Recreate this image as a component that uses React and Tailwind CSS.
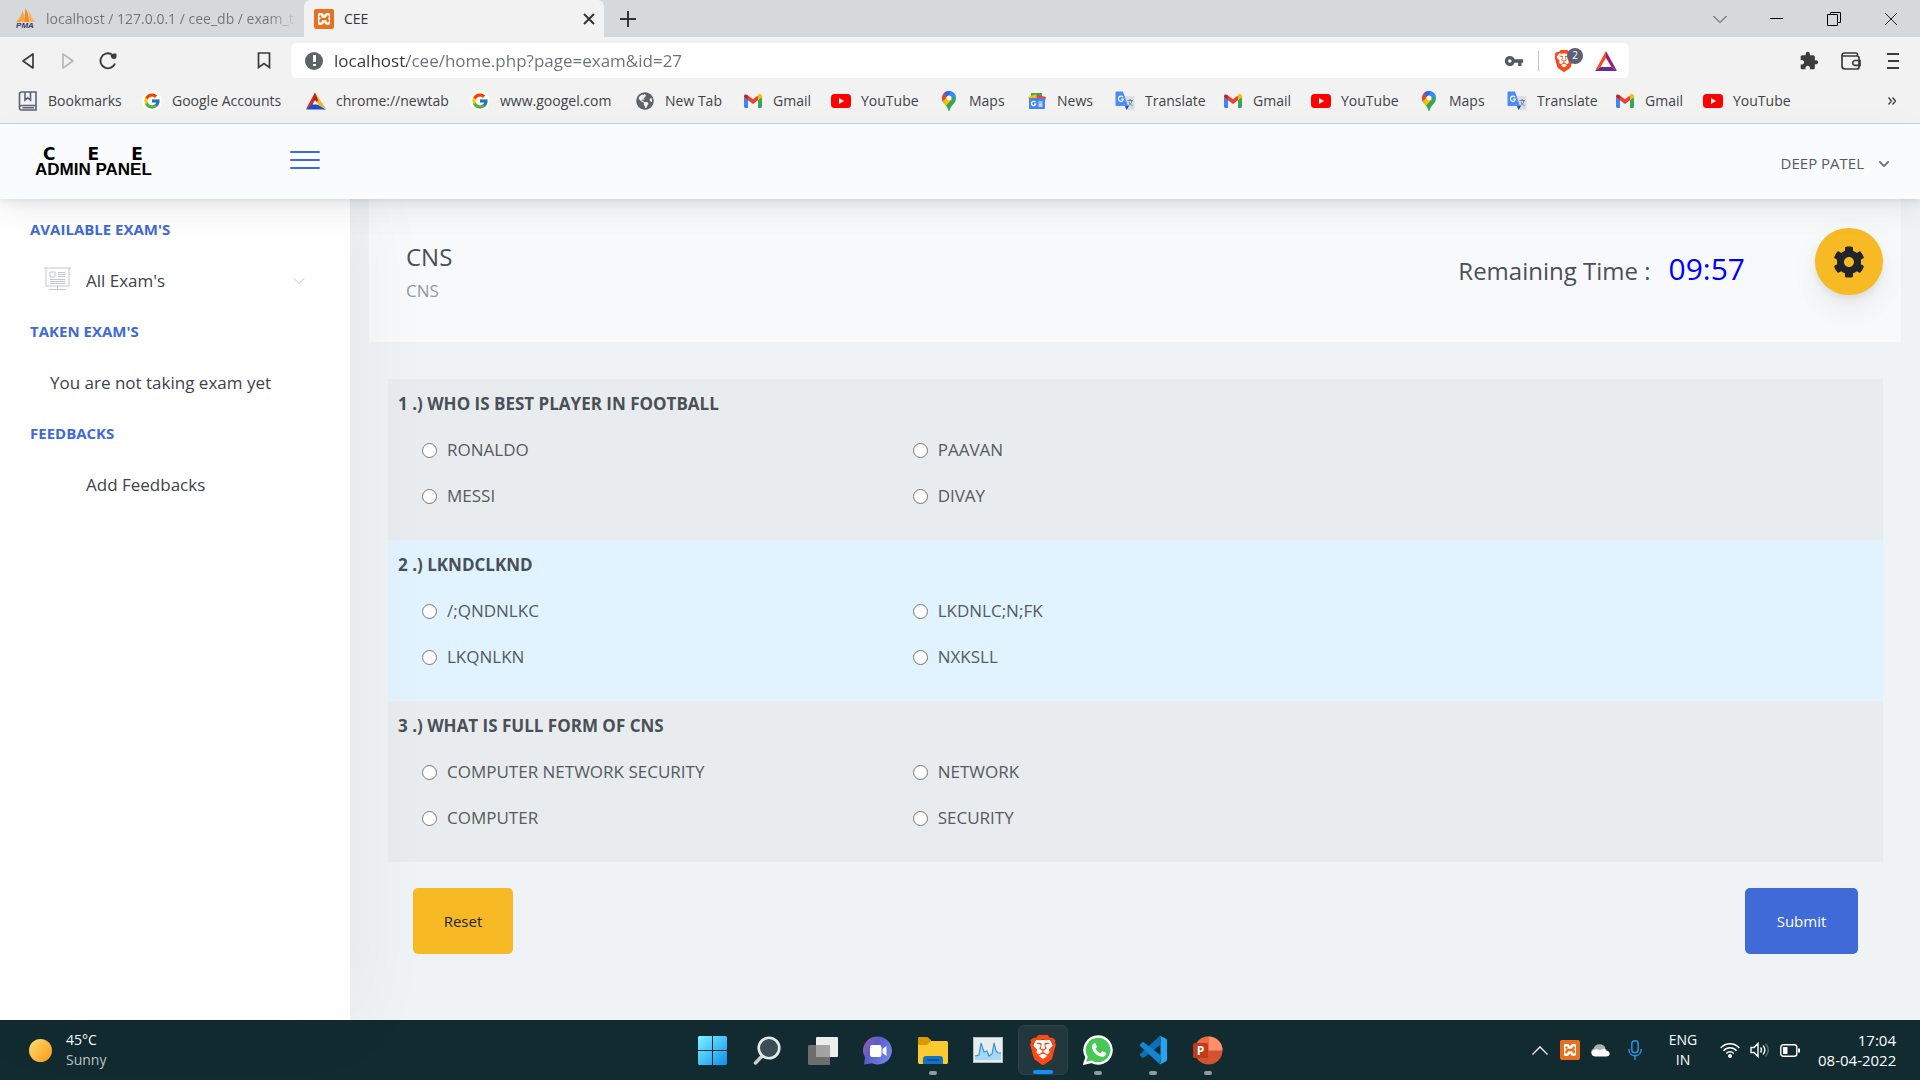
import React from "react";
import { FcGoogle } from "react-icons/fc";
import { SiBrave, SiXampp } from "react-icons/si";
import { FaChevronDown, FaCog, FaGlobeAmericas } from "react-icons/fa";
import { MdVpnKey, MdExtension } from "react-icons/md";

/* ---------- Icons ---------- */

function XamppIcon({ className }) {
  return (
    <span className={`relative inline-flex shrink-0 rounded-sm bg-[#e8701f] ${className}`}>
      <span className="absolute inset-1 bg-white" />
      <SiXampp className="relative h-full w-full text-[#e8701f]" />
    </span>
  );
}

function BraveIcon({ className }) {
  return (
    <span className={`relative inline-flex shrink-0 text-[#fb4a17] ${className}`}>
      <svg viewBox="0 0 24 24" className="absolute inset-0 h-full w-full" aria-hidden="true">
        <path d="M6 4h12l2 5-3 9-5 4-5-4-3-9z" fill="#fff" />
      </svg>
      <SiBrave className="relative h-full w-full" />
    </span>
  );
}

function PmaIcon() {
  return (
    <svg viewBox="0 0 22 24" className="h-6 w-[22px] shrink-0" aria-hidden="true">
      <path d="M8.500 4C8 8 5 12 2 15h7.500C10.500 11 10.500 7 8.500 4z" fill="#f7a53b" />
      <path d="M11.500 1c-.5 6-1 10-1.500 14h5c0-5-1-10-3.500-14z" fill="#f08c1e" />
      <path d="M14.500 3c.5 5 .5 8 1 12h5.500c-3-4-5-8-6.500-12z" fill="#f9b55a" />
      <text x="11" y="21" textAnchor="middle" fontSize="8" fontWeight="bold" fontStyle="italic" fontFamily="Liberation Sans, sans-serif" fill="#34386b">
        PMA
      </text>
    </svg>
  );
}

function BookmarksIcon() {
  return (
    <svg viewBox="0 0 20 20" className="h-5 w-5" fill="none" stroke="#5d6077" strokeWidth="1.6" aria-hidden="true">
      <path d="M18 1H3.500C2 1 1.500 2 1.500 3v14c0 1.500 1 2 2 2H18zM18 14.500H3.500c-1.300 0-2 .8-2 2M7 1v8l2.800-2.200L12.500 9V1M4.500 16.800H16" />
    </svg>
  );
}

function GoogleIcon() {
  return (
    <span className="flex h-5 w-5 items-center justify-center rounded-full bg-white">
      <FcGoogle className="h-[18px] w-[18px]" />
    </span>
  );
}

function NewTabTriangle() {
  return (
    <svg viewBox="0 0 20 20" className="h-5 w-5" aria-hidden="true">
      <path d="M9 1.500 0 18l9-5z" fill="#d92a20" />
      <path d="M9 1.500 20 18l-9-5z" fill="#f6b21b" />
      <path d="M9 1.500 7.500 9 10 13l2-4z" fill="#a8281f" />
      <path d="M0 18.500 8 11.500 20 18.500z" fill="#1d4fc4" />
      <path d="M9 9 6.500 13.500h6z" fill="#f2f2f2" />
    </svg>
  );
}

function GmailIcon() {
  return (
    <svg viewBox="0 0 20 20" className="h-5 w-5" aria-hidden="true">
      <path d="M1 6v9.500C1 16.300 1.600 17 2.400 17H5V8.800z" fill="#4285f4" />
      <path d="M15 17h2.600c.8 0 1.400-.7 1.400-1.500V6l-4 2.800z" fill="#34a853" />
      <path d="M15 4.500v4.700L19 6V5c0-2-2.200-3-3.500-1.900z" fill="#fbbc04" />
      <path d="M5 9.200V4.500l5 3.800 5-3.800v4.700L10 13z" fill="#ea4335" />
      <path d="M1 5v1.100L5 9.200V4.500l-.6-.5C3 2.900 1 3.300 1 5z" fill="#c5221f" />
    </svg>
  );
}

function YouTubeIcon() {
  return (
    <svg viewBox="0 0 20 20" className="h-5 w-5" aria-hidden="true">
      <rect x="0" y="3" width="20" height="14" rx="3.500" fill="#f00" />
      <path d="M8 7v6l5-3z" fill="#fff" />
    </svg>
  );
}

function MapsIcon() {
  return (
    <svg viewBox="0 0 20 20" className="h-5 w-5" aria-hidden="true">
      <defs>
        <clipPath id="mapPin">
          <path d="M10 0a7 7 0 0 0-7 7c0 3 1.300 4.600 3 6.500 1.800 2 2.700 3.500 3.200 5.600.2 1.200 1.400 1.200 1.600 0 .5-2.100 1.400-3.600 3.200-5.600 1.700-1.900 3-3.500 3-6.500a7 7 0 0 0-7-7z" />
        </clipPath>
      </defs>
      <g clipPath="url(#mapPin)">
        <rect width="20" height="20" fill="#34a853" />
        <path d="M7-1h13v5l-7 4-3-1-4-4z" fill="#4285f4" />
        <path d="M0 0h5l5 6-7 6z" fill="#ea4335" />
        <path d="M5 2 8-1h4l-3 7z" fill="#1a73e8" />
        <path d="M2 12 8 6l5 2-7 8z" fill="#fbbc04" />
      </g>
      <circle cx="10" cy="7" r="2.500" fill="#fff" />
    </svg>
  );
}

function NewsIcon() {
  return (
    <svg viewBox="0 0 20 20" className="h-5 w-5" aria-hidden="true">
      <path d="M4 2h11v8H4z" fill="#34a853" />
      <path d="M1 6 9 3l3 9H3z" fill="#fbbc04" />
      <path d="M10 4l9 2-2 8h-8z" fill="#ea4335" />
      <rect x="2" y="7" width="16" height="11" rx="1" fill="#4285f4" />
      <path d="M8.500 11.200a2.200 2.200 0 1 0 .3 2H7M11.500 11h4M11.500 13.100h4M11.500 15.200h4" fill="none" stroke="#fff" strokeWidth="1.200" />
    </svg>
  );
}

function TranslateIcon() {
  return (
    <svg viewBox="0 0 20 20" className="h-5 w-5" aria-hidden="true">
      <path d="M8 5h10.500c.6 0 1 .4 1 1v12c0 .6-.4 1-1 1H11z" fill="#dcdee1" />
      <path d="M12.500 9.500h5.500M15.200 8v1.500M17 9.500c-.6 2.800-2 4.500-4 5.500M14 11c.8 1.800 1.900 3 3.800 4" fill="none" stroke="#5f7c9c" strokeWidth="1" />
      <path d="M10 15h4l-2.500 4z" fill="#1a4fb0" />
      <path d="M1.500.500H8L13 15H1.500C.9 15 .5 14.600.5 14V1.500c0-.6.4-1 1-1z" fill="#4b8cf5" />
      <path d="M8 6A2.600 2.600 0 1 0 8.600 8H6" fill="none" stroke="#fff" strokeWidth="1.200" />
    </svg>
  );
}

function TriangleOutline({ flip, color }) {
  return (
    <svg viewBox="0 0 16 18" className="h-[18px] w-4" fill="none" stroke={color} strokeWidth="1.700" strokeLinejoin="round" aria-hidden="true">
      <path d={flip ? "M3 2v14l10-7z" : "M13 2v14L3 9z"} />
    </svg>
  );
}

function VsCodeIcon() {
  return (
    <svg viewBox="0 0 32 32" className="h-[30px] w-[30px]" aria-hidden="true">
      <path d="M23 1 2.500 20c-.8.7-.8 1.500-.1 2.200l2 1.800c.6.6 1.300.6 2 .1L24 10.500z" fill="#0b70b8" />
      <path d="M23 31 2.500 12c-.8-.7-.8-1.500-.1-2.200l2-1.800c.6-.6 1.300-.6 2-.1L24 21.500z" fill="#1286d2" />
      <path d="M22 1.500c.6-.7 1.500-.8 2.500-.3l5.500 2.700c.7.400 1 .9 1 1.600v21c0 .7-.3 1.200-1 1.600l-5.500 2.700c-1 .500-1.900.4-2.500-.3 1 .3 2-.2 2-1.500V3c0-1.300-1-1.800-2-1.500z" fill="#2aa3ef" />
    </svg>
  );
}

/* ---------- Browser frame ---------- */

const bookmarks = [
  { label: "Bookmarks", icon: BookmarksIcon, width: "w-[74px]" },
  { label: "Google Accounts", icon: GoogleIcon, width: "w-[114px]" },
  { label: "chrome://newtab", icon: NewTabTriangle, width: "w-[114px]" },
  { label: "www.googel.com", icon: GoogleIcon, width: "w-[115px]" },
  { label: "New Tab", icon: () => <FaGlobeAmericas className="h-[18px] w-5 text-[#5f6368]" />, width: "w-[58px]" },
  { label: "Gmail", icon: GmailIcon, width: "w-[38px]" },
  { label: "YouTube", icon: YouTubeIcon, width: "w-[58px]" },
  { label: "Maps", icon: MapsIcon, width: "w-[38px]" },
  { label: "News", icon: NewsIcon, width: "w-[38px]" },
  { label: "Translate", icon: TranslateIcon, width: "w-[58px]" },
  { label: "Gmail", icon: GmailIcon, width: "w-[38px]" },
  { label: "YouTube", icon: YouTubeIcon, width: "w-[58px]" },
  { label: "Maps", icon: MapsIcon, width: "w-[38px]" },
  { label: "Translate", icon: TranslateIcon, width: "w-[58px]" },
  { label: "Gmail", icon: GmailIcon, width: "w-[38px]" },
  { label: "YouTube", icon: YouTubeIcon, width: "w-[58px]" },
];

function TabStrip() {
  return (
    <div className="flex h-[37px] bg-[#d5d9dc] text-sm text-[#333639]">
      <button type="button" className="flex w-[304px] items-center gap-2.5 overflow-hidden pl-3.5 pr-1.5">
        <PmaIcon />
        <span className="flex-1 overflow-hidden whitespace-nowrap bg-[linear-gradient(90deg,#707376_88%,transparent)] bg-clip-text text-left text-transparent">
          localhost / 127.0.0.1 / cee_db / exam_t
        </span>
      </button>
      <div className="flex w-[300px] items-center rounded-t-md bg-[#f2f2f2] pl-2.5 pr-1">
        <button type="button" className="flex flex-1 items-center gap-2.5 text-left">
          <XamppIcon className="h-5 w-5" />
          CEE
        </button>
        <button type="button" aria-label="Close tab" className="p-1">
          <svg viewBox="0 0 14 14" className="h-3.5 w-3.5" stroke="#333" strokeWidth="2" aria-hidden="true">
            <path d="M2 2l10 10M12 2 2 12" />
          </svg>
        </button>
      </div>
      <button type="button" aria-label="New tab" className="flex w-12 items-center justify-center">
        <svg viewBox="0 0 16 16" className="h-4 w-4" stroke="#333" strokeWidth="2" aria-hidden="true">
          <path d="M8 0v16M0 8h16" />
        </svg>
      </button>
      <div className="ml-auto flex pr-px">
        <button type="button" aria-label="Search tabs" className="flex w-[57px] items-center justify-center">
          <svg viewBox="0 0 14 14" className="h-3.5 w-3.5" fill="none" stroke="#333" aria-hidden="true">
            <path d="M.500 4 7 10.500 13.500 4" />
          </svg>
        </button>
        <button type="button" aria-label="Minimize" className="flex w-[57px] items-center justify-center">
          <span className="h-px w-[13px] bg-black" />
        </button>
        <button type="button" aria-label="Restore" className="flex w-[57px] items-center justify-center">
          <svg viewBox="0 0 14 14" className="h-3.5 w-3.5" fill="none" stroke="#000" aria-hidden="true">
            <path d="M.500 2.500h10v11H.500zM3.500 2.500v-2h10v10h-3" />
          </svg>
        </button>
        <button type="button" aria-label="Close" className="flex w-[57px] items-center justify-center">
          <svg viewBox="0 0 14 14" className="h-3.5 w-3.5" stroke="#222" aria-hidden="true">
            <path d="M1 1l12 12M13 1 1 13" />
          </svg>
        </button>
      </div>
    </div>
  );
}

function Toolbar() {
  return (
    <div className="flex h-[47px] items-center">
      <div className="flex w-[291px] shrink-0 items-center pl-2 pr-[7px]">
        <button type="button" aria-label="Back" className="flex w-10 justify-center">
          <TriangleOutline color="#3b3b3b" />
        </button>
        <button type="button" aria-label="Forward" className="flex w-10 justify-center">
          <TriangleOutline flip color="#b9b9b9" />
        </button>
        <button type="button" aria-label="Reload" className="flex w-10 justify-center">
          <svg viewBox="0 0 18 18" className="h-[18px] w-[18px]" fill="none" stroke="#3b3b3b" strokeWidth="1.900" aria-hidden="true">
            <path d="M16 11.500A7.500 7.500 0 1 1 12.500 2.200" />
            <path d="M17.300 1.600c.8 3.600-.2 5.600-2.400 5.500-2.200-.1-3.400-2-3.200-4.500 1.500-.8 3.500-1.300 5.600-1z" fill="#3b3b3b" stroke="none" />
          </svg>
        </button>
        <button type="button" aria-label="Bookmark this page" className="ml-auto flex w-10 justify-center">
          <svg viewBox="0 0 14 17" className="h-[17px] w-3.5" fill="none" stroke="#3b3b3b" strokeWidth="1.700" aria-hidden="true">
            <path d="M1.500 1h11v14.500L7 11.500l-5.500 4z" />
          </svg>
        </button>
      </div>
      <div className="flex h-[35px] flex-1 items-center rounded-md bg-white pl-3.5 pr-3">
        <span className="flex h-[18px] w-[18px] items-center justify-center rounded-full bg-[#5f6368]">
          <span className="flex flex-col items-center gap-0.5">
            <span className="h-[7px] w-[3px] bg-white" />
            <span className="h-0.5 w-[3px] bg-white" />
          </span>
        </span>
        <input
          aria-label="Address"
          defaultValue="localhost/cee/home.php?page=exam&id=27"
          className="ml-[11px] min-w-0 flex-1 bg-[linear-gradient(90deg,#333639_73px,#6c7074_73px)] bg-clip-text text-[17px] text-transparent outline-none"
        />
        <MdVpnKey className="h-5 w-5 text-[#55595d]" />
        <span className="ml-3.5 mr-3.5 h-5 w-px bg-[#c4c4c4]" />
        <button type="button" aria-label="Brave Shields" className="relative flex w-[30px]">
          <BraveIcon className="h-[22px] w-[22px]" />
          <span className="absolute -top-0.5 right-0 flex h-4 w-4 items-center justify-center rounded-full bg-[#5d6077] text-[10px] text-white">
            2
          </span>
        </button>
        <button type="button" aria-label="Rewards" className="ml-3">
          <svg viewBox="0 0 22 20" className="h-5 w-[22px]" aria-hidden="true">
            <path d="M11 0 0 20l5.500-4L11 7z" fill="#ff4724" />
            <path d="M11 0v7l5.500 9 5.500 4z" fill="#9e1f63" />
            <path d="M0 20l5.500-4h11l5.500 4z" fill="#662d91" />
          </svg>
        </button>
      </div>
      <div className="flex w-[291px] shrink-0 items-center justify-end pr-1.5 text-[#3b3b3b]">
        <button type="button" aria-label="Extensions" className="flex w-[42px] justify-center">
          <MdExtension className="h-5 w-5" />
        </button>
        <button type="button" aria-label="Wallet" className="flex w-[42px] justify-center">
          <svg viewBox="0 0 20 18" className="h-[18px] w-5" fill="none" stroke="currentColor" strokeWidth="1.700" aria-hidden="true">
            <path d="M16.500 4V2.500C16.500 1.500 16 1 15 1H3.500C2 1 1 2 1 3.200V14c0 2 1 3 3 3h12c1.300 0 2-.7 2-2V6c0-1.300-.7-2-2-2H3.500C2 4 1 4 1 3.200M19 8.500h-5.500a2.500 2.500 0 0 0 0 4.800H19z" />
          </svg>
        </button>
        <button type="button" aria-label="Menu" className="flex w-[42px] justify-center">
          <svg viewBox="0 0 12 16" className="h-4 w-3" stroke="currentColor" strokeWidth="2" aria-hidden="true">
            <path d="M0 1h12M1 8h11M0 15h12" />
          </svg>
        </button>
      </div>
    </div>
  );
}

function BookmarksBar() {
  return (
    <nav aria-label="Bookmarks" className="flex h-10 items-center gap-5 overflow-hidden border-b border-[#d0d3d6] pb-1.5 pl-[18px] pr-6 text-sm text-[#404346]">
      {bookmarks.map(({ label, icon: Icon, width }, i) => (
        <a key={i} href="#bookmark" className="flex shrink-0 items-center gap-2.5 whitespace-nowrap">
          <Icon />
          <span className={width}>{label}</span>
        </a>
      ))}
      <button type="button" aria-label="More bookmarks" className="ml-auto">
        <svg viewBox="0 0 8 8" className="h-2 w-2" fill="none" stroke="#3a3d40" strokeWidth="1.300" aria-hidden="true">
          <path d="M.500.500 3.500 4l-3 3.500M4.500.500 7.500 4l-3 3.500" />
        </svg>
      </button>
    </nav>
  );
}

/* ---------- Web page ---------- */

function PageHeader() {
  return (
    <header className="relative z-20 flex h-[75px] items-center bg-[#fafbfc] shadow-[0_9px_44px_rgba(4,9,20,0.03),0_19px_28px_rgba(4,9,20,0.03),0_5px_11px_rgba(4,9,20,0.05),0_3px_4px_rgba(4,9,20,0.03)]">
      <div className="w-[290px] shrink-0 pl-[35px]">
        <div className="w-[116px] font-bold text-black">
          <div className="flex justify-between px-2 font-['DejaVu_Sans',sans-serif] text-[17px] leading-[15px]">
            <span>C</span>
            <span>E</span>
            <span>E</span>
          </div>
          <div className="whitespace-nowrap font-['Liberation_Sans',sans-serif] text-[17px] leading-[15px]">ADMIN PANEL</div>
        </div>
      </div>
      <button type="button" aria-label="Toggle sidebar" className="flex w-[30px] flex-col gap-1.5 pb-1">
        <span className="h-0.5 rounded-sm bg-[#3f6ad8]" />
        <span className="h-0.5 rounded-sm bg-[#3f6ad8]" />
        <span className="h-0.5 rounded-sm bg-[#3f6ad8]" />
      </button>
      <button type="button" className="ml-auto mr-[30px] flex items-center gap-3.5 pt-1 text-[15px] text-[#555b61]">
        DEEP PATEL
        <FaChevronDown className="h-3 w-3 text-[#6c757d]" />
      </button>
    </header>
  );
}

function Sidebar() {
  const heading = "flex h-[51px] items-center pl-[30px] text-[15px] font-bold text-[#3f6ad8]";
  const row = "flex h-[51px] items-center text-[#3d4349]";
  return (
    <aside className="relative z-10 w-[350px] shrink-0 bg-white pt-[5px] text-[17px] shadow-[9px_0_75px_rgba(0,0,0,0.05)]">
      <h2 className={heading}>AVAILABLE EXAM'S</h2>
      <a href="#exams" className={`${row} pl-[44px] pr-[45px]`}>
        <svg viewBox="0 0 27 24" className="mb-1 h-6 w-[27px]" fill="none" stroke="#c4c6c8" aria-hidden="true">
          <path d="M0 1h27M2 1v18h23V1M6 5h5v5H6zM14 5.500h7M14 7.500h7M14 9.500h7M6 12.500h15M6 14.500h15M6 16.500h15M13.500 19v3M5 22.500h17" />
        </svg>
        <span className="ml-[15px] flex-1">All Exam's</span>
        <svg viewBox="0 0 12 8" className="h-2 w-3" fill="none" stroke="#c4c6c8" aria-hidden="true">
          <path d="M.500 1 6 6.500 11.500 1" />
        </svg>
      </a>
      <h2 className={heading}>TAKEN EXAM'S</h2>
      <p className={`${row} pl-[50px]`}>You are not taking exam yet</p>
      <h2 className={heading}>FEEDBACKS</h2>
      <a href="#feedback" className={`${row} pl-[86px]`}>
        Add Feedbacks
      </a>
    </aside>
  );
}

const questions = [
  { text: "WHO IS BEST PLAYER IN FOOTBALL", options: ["RONALDO", "PAAVAN", "MESSI", "DIVAY"] },
  { text: "LKNDCLKND", options: ["/;QNDNLKC", "LKDNLC;N;FK", "LKQNLKN", "NXKSLL"] },
  {
    text: "WHAT IS FULL FORM OF CNS",
    options: ["COMPUTER NETWORK SECURITY", "NETWORK", "COMPUTER", "SECURITY"],
  },
];

function Question({ index, text, options }) {
  return (
    <fieldset className="h-[161px] bg-[#e8ecee] px-2.5 pt-[13px] even:bg-[#e0f3ff]">
      <legend className="float-left w-full font-bold leading-6">
        {index + 1} .) {text}
      </legend>
      <div className="clear-both grid grid-cols-3 gap-y-[22px] pl-6 pt-[22px] text-[#555b61]">
        {options.map((option, i) => (
          <label key={option} className={`flex h-6 items-center gap-2.5 ${i % 2 ? "col-span-2 pl-[7px]" : ""}`}>
            <input
              type="radio"
              name={`question-${index}`}
              className="h-[15px] w-[15px] appearance-none rounded-full border border-[#767676] bg-white checked:border-4 checked:border-[#0075ff]"
            />
            {option}
          </label>
        ))}
      </div>
    </fieldset>
  );
}

function ExamPage() {
  return (
    <main className="flex-1 bg-[#f0f3f6] text-[#495057]">
      <section className="relative mx-[19px] flex h-[143px] items-center justify-between bg-[#f8f9fb] pl-[37px] pr-[156px]">
        <div className="pt-1">
          <h1 className="text-2xl leading-9">CNS</h1>
          <p className="text-[17px] leading-8 text-[#95999e]">CNS</p>
        </div>
        <div className="flex items-baseline gap-[18px] pb-1">
          <span className="text-2xl">Remaining Time :</span>
          <time className="text-3xl text-[#00f]">09:57</time>
        </div>
        <button
          type="button"
          aria-label="Settings"
          className="absolute right-[18px] top-[29px] flex h-[67px] w-[68px] items-center justify-center rounded-full bg-[#f7b924] shadow-[0_9px_44px_rgba(4,9,20,0.03),0_19px_28px_rgba(4,9,20,0.03),0_5px_11px_rgba(4,9,20,0.05),0_3px_4px_rgba(4,9,20,0.03)]"
        >
          <FaCog className="h-8 w-8 text-[#212529]" />
        </button>
      </section>
      <form className="ml-[38px] mr-[37px] mt-[37px] text-[17px]">
        {questions.map((q, i) => (
          <Question key={q.text} index={i} {...q} />
        ))}
        <div className="flex justify-between px-[25px] pt-[26px] text-[15px]">
          <button type="reset" className="h-[66px] w-[100px] rounded-[5px] bg-[#f7b924] text-[#212529]">
            Reset
          </button>
          <button type="submit" className="h-[66px] w-[113px] rounded-[5px] bg-[#3f6ad8] text-white">
            Submit
          </button>
        </div>
      </form>
    </main>
  );
}

/* ---------- Windows taskbar ---------- */

const apps = [
  {
    name: "Start",
    icon: (
      <svg viewBox="0 0 29 29" className="h-[29px] w-[29px]" aria-hidden="true">
        <defs>
          <linearGradient id="win" x1="0" y1="0" x2="1" y2="1">
            <stop offset="0" stopColor="#7df3ff" />
            <stop offset="1" stopColor="#0f8fef" />
          </linearGradient>
        </defs>
        <path d="M1 0h13v14H0V1zM15 0h13l1 1v13H15zM0 15h14v14H1l-1-1zM15 15h14v13l-1 1H15z" fill="url(#win)" />
      </svg>
    ),
  },
  {
    name: "Search",
    icon: (
      <svg viewBox="0 0 29 29" className="h-[29px] w-[29px]" fill="none" aria-hidden="true">
        <path d="M9.500 19.500 2.500 27" stroke="#c8ccce" strokeWidth="3.500" strokeLinecap="round" />
        <circle cx="16" cy="12" r="10.300" fill="#3a4e54" stroke="#e6e9ea" strokeWidth="2.600" />
      </svg>
    ),
  },
  {
    name: "Task view",
    icon: (
      <svg viewBox="0 0 30 29" className="h-[29px] w-[30px]" aria-hidden="true">
        <rect x="8" y="1" width="22" height="20" rx="1" fill="#ededed" />
        <rect x="0" y="9" width="22" height="20" rx="1" fill="#6d6d6d" />
        <rect x="8" y="9" width="14" height="12" fill="#a3a3a3" />
      </svg>
    ),
  },
  {
    name: "Chat",
    icon: (
      <svg viewBox="0 0 29 29" className="h-[29px] w-[29px]" aria-hidden="true">
        <defs>
          <linearGradient id="chat" x1="0" y1="0" x2="1" y2="0.600">
            <stop offset="0" stopColor="#a35fa8" />
            <stop offset="0.450" stopColor="#5b5cc8" />
            <stop offset="1" stopColor="#6f86e8" />
          </linearGradient>
        </defs>
        <path d="M15 .500a14 14 0 1 1-6 26.700L1 28.500l1-7A14 14 0 0 1 15 .500z" fill="url(#chat)" />
        <rect x="7" y="9" width="11.500" height="12" rx="2" fill="#fff" />
        <path d="m19.500 13 4-3v10l-4-3z" fill="#fff" />
      </svg>
    ),
  },
  {
    name: "File Explorer",
    running: true,
    icon: (
      <svg viewBox="0 0 30 29" className="h-[29px] w-[30px]" aria-hidden="true">
        <path d="M0 2.500C0 1.500.5 1 1.500 1h8L13 4v6H0z" fill="#d99a08" />
        <path d="M0 9h9l4-4h15c1.500 0 2 .5 2 2v19c0 1.500-.500 2-2 2H2c-1.500 0-2-.5-2-2z" fill="#fdc930" />
        <path d="M5 28v-5c0-2 1-3 3-3h14c2 0 3 1 3 3v5z" fill="#1173c4" />
        <path d="M9 24h12" stroke="#0a4c8a" strokeWidth="1.500" />
      </svg>
    ),
  },
  {
    name: "Resource Monitor",
    icon: (
      <svg viewBox="0 0 30 26" className="h-[26px] w-[30px]" aria-hidden="true">
        <rect x=".500" y=".500" width="29" height="25" fill="#e8edf2" stroke="#b8bdc2" />
        <path d="M2 23V19l4-1 2-12 3 9 3-1 2 5 3-2 2-11 2 8 2 2h3v7z" fill="#a4d9f5" />
        <path d="M2 19l4-1 2-12 3 9 3-1 2 5 3-2 2-11 2 8 2 2h3" fill="none" stroke="#3a93cf" strokeWidth="1.200" />
      </svg>
    ),
  },
  { name: "Brave", running: true, active: true, icon: <BraveIcon className="h-[30px] w-[30px]" /> },
  {
    name: "WhatsApp",
    running: true,
    icon: (
      <svg viewBox="0 0 30 30" className="h-[30px] w-[30px]" aria-hidden="true">
        <path d="M15 1.500a13.500 13.500 0 1 1-6.500 25.300L1.500 28.500l2-6.500A13.500 13.500 0 0 1 15 1.500z" fill="#47c755" stroke="#fff" strokeWidth="2.400" />
        <path d="M10.800 8.300c.7-.6 1.400-.4 1.800.4l1.100 2.500c.2.500.1.900-.2 1.300l-1 1.200c1.200 2.200 2.800 3.600 5 4.500l1.200-1.500c.3-.400.8-.5 1.200-.3l2.500 1.200c.600.300.7.700.6 1.300-.5 2.100-2.500 3.200-4.500 2.800-5-1-8.800-4.800-9.400-9-.2-1.700.4-3.300 1.700-4.400z" fill="#fff" />
      </svg>
    ),
  },
  { name: "Visual Studio Code", running: true, icon: <VsCodeIcon /> },
  {
    name: "PowerPoint",
    running: true,
    icon: (
      <svg viewBox="0 0 30 29" className="h-[29px] w-[30px]" aria-hidden="true">
        <circle cx="15.500" cy="14.500" r="14" fill="#d35230" />
        <path d="M15.500.500a14 14 0 0 1 14 14h-14z" fill="#ff8f6b" />
        <path d="M15.500.500v14h-14a14 14 0 0 1 14-14z" fill="#ed6c47" />
        <rect x="0" y="7" width="15" height="15" rx="1.500" fill="#c13b1b" />
        <text x="7.500" y="19" textAnchor="middle" fontSize="12" fontWeight="bold" fontFamily="Open Sans, sans-serif" fill="#fff">
          P
        </text>
      </svg>
    ),
  },
];

function Taskbar() {
  return (
    <footer className="grid h-[60px] grid-cols-[1fr_auto_1fr] items-center bg-[#112b30] text-sm leading-5 text-white">
      <button type="button" className="flex items-center gap-3.5 justify-self-start pl-[29px] text-left">
        <span className="h-[23px] w-[23px] rounded-full bg-linear-to-br from-[#ffe36a] to-[#ff9500]" />
        <span>
          <span className="block">45°C</span>
          <span className="block text-[#bcc5c7]">Sunny</span>
        </span>
      </button>
      <div className="flex gap-[5px]">
        {apps.map((app) => (
          <button
            key={app.name}
            type="button"
            aria-label={app.name}
            className={`relative flex h-[50px] w-[50px] items-center justify-center rounded-md ${
              app.active ? "border border-[#2c4146] bg-[#22383d]" : ""
            }`}
          >
            {app.icon}
            {app.running && (
              <span
                className={`absolute bottom-0 h-1 rounded-full ${app.active ? "w-5 bg-[#0a93ff]" : "w-2 bg-[#8f9b9e]"}`}
              />
            )}
          </button>
        ))}
      </div>
      <div className="flex items-center justify-self-end pr-6">
        <svg viewBox="0 0 16 9" className="h-[9px] w-4" fill="none" stroke="#fff" strokeWidth="1.300" aria-hidden="true">
          <path d="M.500 8.500 8 1l7.500 7.500" />
        </svg>
        <XamppIcon className="ml-3 h-5 w-5" />
        <svg viewBox="0 0 20 14" className="ml-2.5 h-3.5 w-5" aria-hidden="true">
          <path d="M4 13a4 4 0 0 1-.5-7.500A6.500 6.500 0 0 1 15.500 5l-4 8z" fill="#a9b1b4" />
          <path d="M5 13.500a3.500 3.500 0 0 1-2-6.300C6 5.500 8 6 10 7.500c3-2.500 6-2 6.500 0 4 .5 4.500 6-.500 6z" fill="#fff" />
        </svg>
        <svg viewBox="0 0 14 20" className="ml-[18px] h-5 w-3.5" fill="none" stroke="#2f90e0" strokeWidth="1.500" aria-hidden="true">
          <rect x="3.800" y=".800" width="6.400" height="12" rx="3.200" />
          <path d="M.800 9c0 9 12.400 9 12.400 0M7 15.800V20" />
        </svg>
        <span className="ml-[26px] w-[30px] text-center">
          <span className="block">ENG</span>
          <span className="block">IN</span>
        </span>
        <svg viewBox="0 0 20 16" className="ml-[22px] h-4 w-5" fill="none" stroke="#fff" strokeWidth="1.500" aria-hidden="true">
          <path d="M.700 6c5.200-5.600 13.400-5.600 18.600 0M3.500 8.800c3.600-4 9.400-4 13 0M6.300 11.500c2-2.200 5.400-2.200 7.400 0" />
          <circle cx="10" cy="14" r="1.200" fill="#fff" />
        </svg>
        <svg viewBox="0 0 20 16" className="ml-2.5 h-4 w-5" fill="none" stroke="#fff" strokeWidth="1.400" aria-hidden="true">
          <path d="M1 5.500h3L8 1.500v13l-4-4H1zM10.500 5.500c1.200 1.500 1.200 3.500 0 5M13 3.500c2.300 2.700 2.300 6.300 0 9" />
          <path d="M15.500 1.500c3.500 4 3.500 9 0 13" stroke="#5e7175" />
        </svg>
        <svg viewBox="0 0 20 13" className="ml-2.5 h-[13px] w-5" fill="none" stroke="#fff" strokeWidth="1.400" aria-hidden="true">
          <rect x=".800" y=".800" width="16" height="11.400" rx="2.500" />
          <path d="M19 4.500v4" strokeWidth="2" />
          <rect x="3" y="3" width="4.500" height="7" fill="#fff" stroke="none" />
        </svg>
        <time className="ml-[18px] w-[78px] text-right text-[15px] leading-5">
          <span className="block">17:04</span>
          <span className="block whitespace-nowrap">08-04-2022</span>
        </time>
      </div>
    </footer>
  );
}

export default function App() {
  return (
    <div className="flex min-h-screen flex-col bg-[#f2f2f2] font-['Open_Sans','Noto_Sans',sans-serif]">
      <TabStrip />
      <Toolbar />
      <BookmarksBar />
      <PageHeader />
      <div className="flex flex-1">
        <Sidebar />
        <ExamPage />
      </div>
      <Taskbar />
    </div>
  );
}
